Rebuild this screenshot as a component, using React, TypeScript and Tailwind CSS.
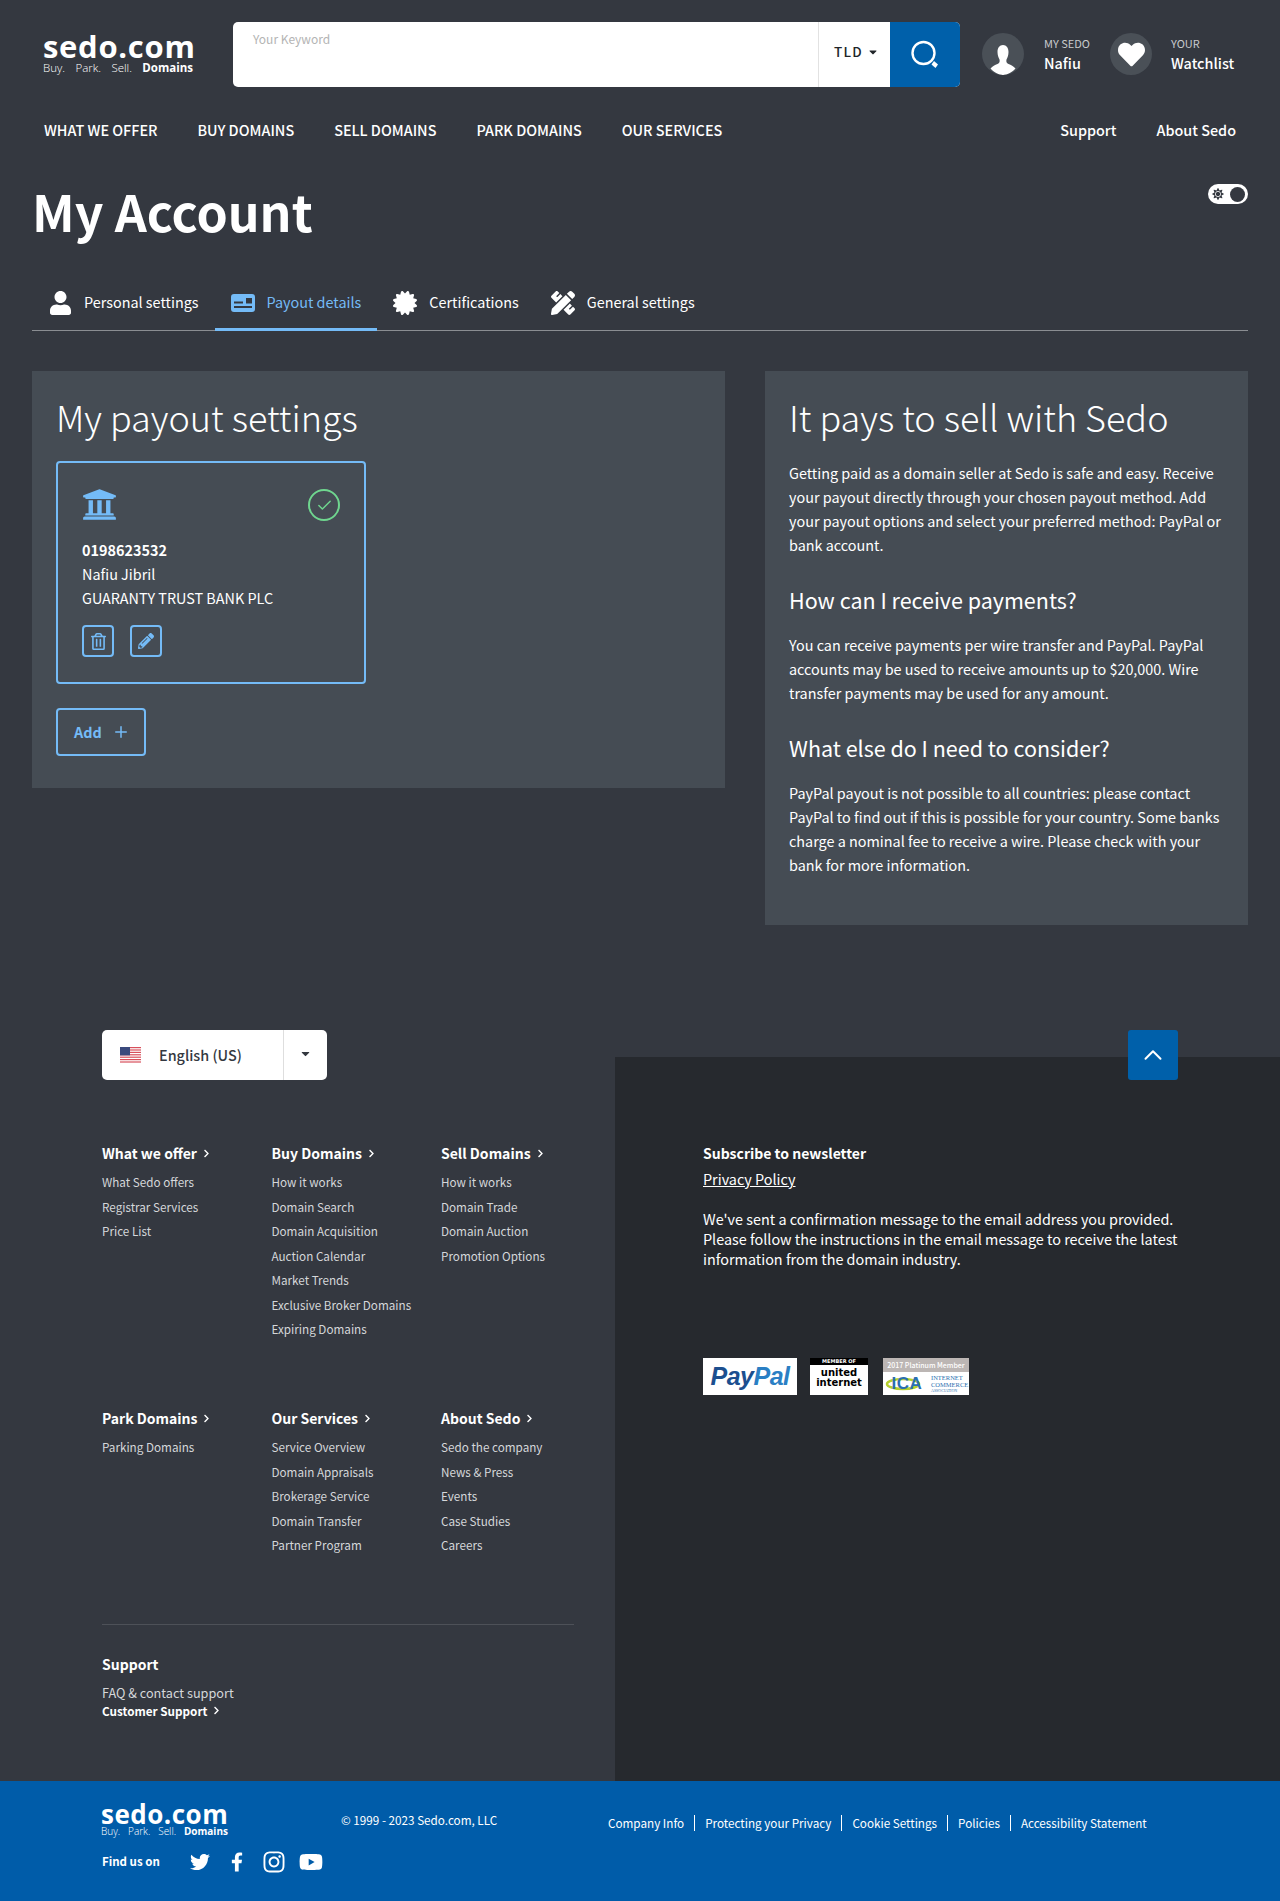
import type { ReactNode } from "react";
import {
  FaCaretDown,
  FaCertificate,
  FaChevronRight,
  FaFacebookF,
  FaHeart,
  FaInstagram,
  FaPencilAlt,
  FaPencilRuler,
  FaRegTrashAlt,
  FaSun,
  FaTwitter,
  FaUniversity,
  FaUser,
  FaYoutube,
} from "react-icons/fa";
import { LuCheck, LuChevronUp, LuPlus } from "react-icons/lu";

const mainNav = ["WHAT WE OFFER", "BUY DOMAINS", "SELL DOMAINS", "PARK DOMAINS", "OUR SERVICES"];

const footerTop = [
  { title: "What we offer", links: ["What Sedo offers", "Registrar Services", "Price List"] },
  {
    title: "Buy Domains",
    links: [
      "How it works",
      "Domain Search",
      "Domain Acquisition",
      "Auction Calendar",
      "Market Trends",
      "Exclusive Broker Domains",
      "Expiring Domains",
    ],
  },
  { title: "Sell Domains", links: ["How it works", "Domain Trade", "Domain Auction", "Promotion Options"] },
];

const footerBottom = [
  { title: "Park Domains", links: ["Parking Domains"] },
  {
    title: "Our Services",
    links: ["Service Overview", "Domain Appraisals", "Brokerage Service", "Domain Transfer", "Partner Program"],
  },
  { title: "About Sedo", links: ["Sedo the company", "News & Press", "Events", "Case Studies", "Careers"] },
];

const legal = ["Company Info", "Protecting your Privacy", "Cookie Settings", "Policies", "Accessibility Statement"];

function Logo({ small }: { small?: boolean }) {
  if (small) {
    return (
      <div className="w-[127px] text-white [font-family:'Open_Sans',sans-serif]">
        <div className="text-[26px] leading-[21px] font-bold tracking-[0.5px]">sedo.com</div>
        <div className="flex justify-between text-[10px] leading-[12px]">
          <span className="font-light">Buy.</span>
          <span className="font-light">Park.</span>
          <span className="font-light">Sell.</span>
          <span className="font-bold">Domains</span>
        </div>
      </div>
    );
  }
  return (
    <div className="w-[150px] text-white [font-family:'Open_Sans',sans-serif]">
      <div className="text-[31px] leading-[25px] font-bold tracking-[0.7px]">sedo.com</div>
      <div className="mt-[2px] flex justify-between text-[11.5px] leading-[14px]">
        <span className="font-light">Buy.</span>
        <span className="font-light">Park.</span>
        <span className="font-light">Sell.</span>
        <span className="font-bold">Domains</span>
      </div>
    </div>
  );
}

function LinkColumn({ title, links }: { title: string; links: string[] }) {
  return (
    <div>
      <div className="flex items-center gap-[6px] text-[14px] leading-[20px] font-bold text-white">
        {title}
        <FaChevronRight className="w-[7px] h-[9px]" />
      </div>
      <div className="mt-[7px] flex flex-col">
        {links.map((link) => (
          <a key={link} className="text-[11.7px] leading-[24.5px] text-[#d5d7da]">
            {link}
          </a>
        ))}
      </div>
    </div>
  );
}

function Tab({ icon, label, active }: { icon: ReactNode; label: string; active?: boolean }) {
  return (
    <div
      className={
        active
          ? "h-[54px] px-[16px] flex items-center gap-[12px] border-b-[3px] border-[#74bbf7] text-[#74bbf7]"
          : "h-[54px] px-[16px] flex items-center gap-[12px] border-b-[3px] border-transparent text-white"
      }>
      <span className="w-[24px] flex justify-center">{icon}</span>
      <span className="pb-[1px] text-[14.4px]">{label}</span>
    </div>
  );
}

function CardIcon() {
  return (
    <svg viewBox="0 0 24 18" className="w-[24px] h-[18px]">
      <path
        fill="currentColor"
        fillRule="evenodd"
        d="M3 0h18a3 3 0 0 1 3 3v12a3 3 0 0 1-3 3H3a3 3 0 0 1-3-3V3a3 3 0 0 1 3-3zM3 7.500v2h9v-2zM15 4v5.500h6V4zM3 12v2h18v-2z"
      />
    </svg>
  );
}

function UsFlag() {
  return (
    <svg width="21" height="16" viewBox="0 0 21 16" className="shrink-0">
      <rect width="21" height="16" fill="#fff" />
      {[0, 2.4, 4.8, 7.2, 9.6, 12, 14.4].map((y) => (
        <rect key={y} y={y} width="21" height="1.2" fill="#d8505c" />
      ))}
      <rect width="10" height="8.4" fill="#3b4a7d" />
    </svg>
  );
}

function Silhouette() {
  return (
    <svg viewBox="0 0 42 42" className="w-[42px] h-[42px]">
      <path
        fill="#fff"
        d="M21 12c3.500 0 5.500 3 5.500 7 0 3-1 5.500-2 7.500-.5 2 0 3.500 2 4.500 2.500 1 5 2 7 4.500-3 3.500-8 6.500-12.500 6.500s-9.500-3-12.500-6.500c2-2.500 4.500-3.500 7-4.500 2-1 2.500-2.500 2-4.500-1-2-2-4.500-2-7.500 0-4 2-7 5.500-7z"
      />
    </svg>
  );
}

function SearchGlyph() {
  return (
    <svg viewBox="0 0 30 30" className="w-[30px] h-[30px]">
      <circle cx="13.5" cy="13" r="11" fill="none" stroke="#fff" strokeWidth="2.4" />
      <path fill="#fff" d="M24 21l4 3.500-2.500 3.500-4-3.500z" />
    </svg>
  );
}

export default function App() {
  return (
    <div className="w-[1280px] h-[1901px] flex flex-col overflow-hidden bg-[#343840] text-white [font-family:'Noto_Sans_CJK_SC','Noto_Sans',sans-serif]">
      {/* header */}
      <header className="h-[110px] flex items-start pt-[22px] pl-[43px]">
        <div className="w-[190px] pt-[12px]">
          <Logo />
        </div>
        <div className="w-[727px] h-[65px] flex rounded-[5px] overflow-hidden bg-white">
          <div className="flex-1 pl-[20px] pt-[8px] text-[12px] leading-[18px] text-[#b4b4b4]">Your Keyword</div>
          <div className="w-[72px] border-l border-[#e2e2e2] flex items-center justify-center gap-[4px] pl-[4px] pb-[6px] text-[#212529] text-[13.5px] tracking-[1.3px] font-medium">
            TLD <FaCaretDown className="w-[12px] h-[12px]" />
          </div>
          <div className="w-[70px] bg-[#0060aa] flex items-center justify-center">
            <SearchGlyph />
          </div>
        </div>
        <div className="ml-[22px] mt-[11px] flex items-center">
          <div className="w-[42px] h-[42px] rounded-full bg-[#4a5057] overflow-hidden">
            <Silhouette />
          </div>
          <div className="ml-[20px] w-[66px]">
            <div className="text-[11px] leading-[16px] text-[#c9cbce]">MY SEDO</div>
            <div className="mt-[2px] text-[14.4px] leading-[20px] font-medium">Nafiu</div>
          </div>
          <div className="w-[42px] h-[42px] rounded-full bg-[#4a5057] flex items-center justify-center">
            <FaHeart className="w-[27px] h-[27px]" />
          </div>
          <div className="ml-[19px]">
            <div className="text-[11px] leading-[16px] text-[#c9cbce]">YOUR</div>
            <div className="mt-[2px] text-[14.4px] leading-[20px] font-medium">Watchlist</div>
          </div>
        </div>
      </header>

      {/* main nav */}
      <nav className="h-[40px] flex items-center justify-between px-[44px] text-[14.4px] font-medium">
        <div className="flex gap-[40px]">
          {mainNav.map((item) => (
            <a key={item}>{item}</a>
          ))}
        </div>
        <div className="flex gap-[40px]">
          <a>Support</a>
          <a>About Sedo</a>
        </div>
      </nav>

      <main className="px-[32px]">
        <div className="h-[126px] flex justify-between">
          <h1 className="pt-[24px] text-[50px] leading-[72px] font-bold">My Account</h1>
          <div className="mt-[34px] w-[40px] h-[20px] rounded-full bg-white flex items-center justify-between pl-[4px] pr-[3px]">
            <FaSun className="w-[12px] h-[12px] text-[#343840]" />
            <span className="w-[15px] h-[15px] rounded-full bg-[#343840]" />
          </div>
        </div>

        {/* tabs */}
        <div className="h-[54px] flex items-center border-b border-[#8a8d92] box-content">
          <div className="flex h-[54px] pt-[1px]">
            <Tab icon={<FaUser className="w-[21px] h-[24px]" />} label="Personal settings" />
            <Tab active icon={<CardIcon />} label="Payout details" />
            <Tab icon={<FaCertificate className="w-[24px] h-[24px]" />} label="Certifications" />
            <Tab icon={<FaPencilRuler className="w-[24px] h-[24px]" />} label="General settings" />
          </div>
        </div>

        {/* panels */}
        <div className="mt-[40px] flex items-start gap-[40px]">
          <section className="w-[693px] h-[417px] bg-[#454c54] px-[24px] pt-[20px]">
            <h2 className="text-[36px] leading-[50px] font-light">My payout settings</h2>
            <div className="mt-[20px] w-[310px] h-[223px] border-2 border-[#74bbf7] rounded-[4px] px-[24px] pt-[24px]">
              <div className="flex items-start justify-between">
                <FaUniversity className="w-[35px] h-[35px] text-[#74bbf7]" />
                <div className="mt-[2px] w-[32px] h-[32px] rounded-full border-2 border-[#6fd68f] flex items-center justify-center">
                  <LuCheck className="w-[17px] h-[17px] text-[#6fd68f]" />
                </div>
              </div>
              <div className="mt-[16px] text-[14.4px] leading-[24px]">
                <div className="font-bold">0198623532</div>
                <div>Nafiu Jibril</div>
                <div>GUARANTY TRUST BANK PLC</div>
              </div>
              <div className="mt-[15px] flex gap-[16px]">
                <button className="w-[32px] h-[32px] border-2 border-[#74bbf7] rounded-[4px] flex items-center justify-center text-[#74bbf7]">
                  <FaRegTrashAlt className="w-[15px] h-[17px]" />
                </button>
                <button className="w-[32px] h-[32px] border-2 border-[#74bbf7] rounded-[4px] flex items-center justify-center text-[#74bbf7]">
                  <FaPencilAlt className="w-[16px] h-[16px]" />
                </button>
              </div>
            </div>
            <button className="mt-[24px] w-[90px] h-[48px] border-2 border-[#74bbf7] rounded-[4px] flex items-center justify-center gap-[10px] pl-[2px] text-[14.4px] font-bold text-[#74bbf7]">
              Add <LuPlus className="w-[18px] h-[18px]" />
            </button>
          </section>

          <section className="w-[483px] h-[554px] bg-[#454c54] px-[24px] pt-[20px]">
            <h2 className="text-[36px] leading-[50px] font-light">It pays to sell with Sedo</h2>
            <p className="mt-[20px] text-[14.4px] leading-[24px]">
              Getting paid as a domain seller at Sedo is safe and easy. Receive your payout directly through your chosen
              payout method. Add your payout options and select your preferred method: PayPal or bank account.
            </p>
            <h3 className="mt-[27px] text-[21.5px] leading-[32px]">How can I receive payments?</h3>
            <p className="mt-[17px] text-[14.4px] leading-[24px]">
              You can receive payments per wire transfer and PayPal. PayPal accounts may be used to receive amounts up
              to $20,000. Wire transfer payments may be used for any amount.
            </p>
            <h3 className="mt-[27px] text-[21.5px] leading-[32px]">What else do I need to consider?</h3>
            <p className="mt-[17px] text-[14.4px] leading-[24px]">
              PayPal payout is not possible to all countries: please contact PayPal to find out if this is possible for
              your country. Some banks charge a nominal fee to receive a wire. Please check with your bank for more
              information.
            </p>
          </section>
        </div>
      </main>

      {/* footer */}
      <footer className="mt-[105px] flex-1 flex">
        <div className="w-[615px] pl-[102px] pr-[41px]">
          <div className="w-[225px] h-[50px] bg-white rounded-[5px] flex items-center text-[#343840]">
            <div className="flex-1 flex items-center gap-[18px] pl-[18px] text-[14.4px] font-medium">
              <UsFlag />
              English (US)
            </div>
            <div className="w-[44px] h-[50px] pb-[3px] border-l border-[#dedede] flex items-center justify-center">
              <FaCaretDown className="w-[13px] h-[13px]" />
            </div>
          </div>

          <div className="mt-[63px] grid grid-cols-[169.5px_169.5px_1fr] h-[265px]">
            {footerTop.map((col) => (
              <LinkColumn key={col.title} {...col} />
            ))}
          </div>
          <div className="grid grid-cols-[169.5px_169.5px_1fr] h-[216px]">
            {footerBottom.map((col) => (
              <LinkColumn key={col.title} {...col} />
            ))}
          </div>

          <div className="border-t border-[#4d5158] pt-[29px]">
            <div className="text-[14px] leading-[20px] font-bold">Support</div>
            <div className="mt-[9px] text-[12.7px] leading-[19px] text-[#d5d7da]">FAQ &amp; contact support</div>
            <div className="flex items-center gap-[6px] text-[11.7px] leading-[17px] font-bold">
              Customer Support
              <FaChevronRight className="w-[7px] h-[9px]" />
            </div>
          </div>
        </div>

        <div className="relative flex-1 mt-[27px] bg-[#26292e] pl-[88px] pt-[86px]">
          <button className="absolute left-[513px] top-[-27px] w-[50px] h-[50px] rounded-[3px] bg-[#0060aa] flex items-center justify-center">
            <LuChevronUp className="w-[30px] h-[30px] stroke-[1.6]" />
          </button>
          <div className="text-[14px] leading-[20px] font-bold">Subscribe to newsletter</div>
          <a className="block mt-[6px] text-[14.4px] leading-[20px] underline">Privacy Policy</a>
          <p className="mt-[20px] w-[490px] text-[14.4px] leading-[20px]">
            We've sent a confirmation message to the email address you provided. Please follow the instructions in the
            email message to receive the latest information from the domain industry.
          </p>
          <div className="mt-[89px] flex items-start">
            <div className="w-[94px] h-[37px] bg-white flex items-center justify-center text-[25px] font-bold italic [font-family:'Liberation_Sans',sans-serif] tracking-[-0.5px]">
              <span className="text-[#1c4f8f]">Pay</span>
              <span className="text-[#2a7fc4]">Pal</span>
            </div>
            <div className="ml-[13px] w-[58px] h-[37px] bg-white flex flex-col items-center text-black [font-family:'DejaVu_Sans',sans-serif]">
              <div className="w-full h-[7px] bg-black text-white text-[5px] leading-[7px] font-bold text-center">
                MEMBER OF
              </div>
              <div className="mt-[3px] text-[10px] leading-[10px] font-bold">united</div>
              <div className="text-[10px] leading-[10px] font-bold">internet</div>
            </div>
            <div className="ml-[15px] w-[86px] h-[37px] bg-white flex flex-col">
              <div className="h-[14px] bg-[#bcb6b4] text-white text-[7px] leading-[14px] text-center font-medium">
                2017 Platinum Member
              </div>
              <div className="flex-1 flex items-center pl-[2px] gap-[2px]">
                <div className="relative w-[44px] h-[20px] flex items-center justify-center">
                  <svg viewBox="0 0 44 20" className="absolute inset-0 w-[44px] h-[20px]">
                    <ellipse cx="18" cy="10" rx="16" ry="5" fill="none" stroke="#b5cf2e" strokeWidth="2.5" />
                  </svg>
                  <span className="relative text-[17px] leading-[18px] font-bold tracking-[0.5px] text-[#2a6fb0] [font-family:'Liberation_Sans',sans-serif]">
                    ICA
                  </span>
                </div>
                <div className="text-[6.5px] leading-[7px] text-[#2a6fb0] [font-family:'Liberation_Serif',serif]">
                  <div>INTERNET</div>
                  <div>COMMERCE</div>
                  <div className="text-[4px] leading-[5px]">ASSOCIATION</div>
                </div>
              </div>
            </div>
          </div>
        </div>
      </footer>

      {/* bottom bar */}
      <div className="h-[120px] bg-[#005ca9] pl-[101px] pt-[23px] flex items-start">
        <div className="w-[240px]">
          <Logo small />
          <div className="mt-[13px] flex items-center">
            <span className="w-[89px] pl-[1px] text-[11.5px] font-bold">Find us on</span>
            <div className="flex items-center">
              <FaTwitter className="w-[20px] h-[20px]" />
              <FaFacebookF className="ml-[21px] w-[12px] h-[22px]" />
              <FaInstagram className="ml-[19px] w-[24px] h-[24px]" />
              <FaYoutube className="ml-[13px] w-[24px] h-[24px]" />
            </div>
          </div>
        </div>
        <div className="pt-[6px] w-[267px] text-[11.7px] leading-[20px]">© 1999 - 2023 Sedo.com, LLC</div>
        <div className="pt-[11px] flex text-[11.7px] leading-[16px]">
          {legal.map((item, index) => (
            <a key={item} className={index === 0 ? "pr-[10px]" : "px-[10px] border-l border-white"}>
              {item}
            </a>
          ))}
        </div>
      </div>
    </div>
  );
}
